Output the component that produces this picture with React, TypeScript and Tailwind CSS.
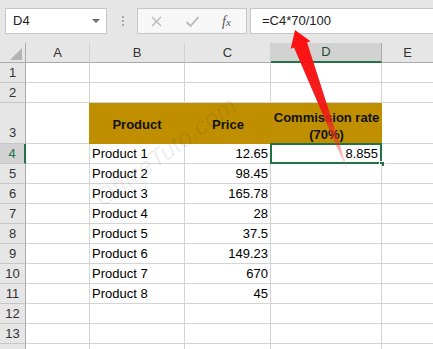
import React from "react";

const FONT = { fontFamily: '"Liberation Sans", Arial, sans-serif' };

const rows: { n: number; b?: string; c?: string; d?: string }[] = [
  { n: 1 },
  { n: 2 },
  { n: 4, b: "Product 1", c: "12.65", d: "8.855" },
  { n: 5, b: "Product 2", c: "98.45" },
  { n: 6, b: "Product 3", c: "165.78" },
  { n: 7, b: "Product 4", c: "28" },
  { n: 8, b: "Product 5", c: "37.5" },
  { n: 9, b: "Product 6", c: "149.23" },
  { n: 10, b: "Product 7", c: "670" },
  { n: 11, b: "Product 8", c: "45" },
  { n: 12 },
  { n: 13 },
  { n: 14 },
];

function DataRow({ n, b, c, d }: { n: number; b?: string; c?: string; d?: string }) {
  const sel = n === 4;
  const label = n === 14 ? "" : String(n);
  return (
    <div className="flex h-[20px]">
      {sel ? (
        <div className="w-[26px] shrink-0 bg-[#d2d2d2] border-r-2 border-r-[#217346] border-b border-b-[#c6c6c6] flex items-center justify-center text-[13px] text-[#217346]">
          {label}
        </div>
      ) : (
        <div className="w-[26px] shrink-0 bg-[#e6e6e6] border-r border-r-[#ababab] border-b border-b-[#c6c6c6] flex items-center justify-center text-[13px] text-[#333]">
          {label}
        </div>
      )}
      <div className="w-[64px] shrink-0 bg-white border-r border-b border-[#d4d4d4]" />
      <div className="w-[95px] shrink-0 bg-white border-r border-b border-[#d4d4d4] flex items-center pl-[2px] text-[13px] text-black whitespace-nowrap">
        {b}
      </div>
      <div className="w-[86px] shrink-0 bg-white border-r border-b border-[#d4d4d4] flex items-center justify-end pr-[2px] text-[13px] text-black">
        {c}
      </div>
      <div className="relative w-[111px] shrink-0 bg-white border-r border-b border-[#d4d4d4] flex items-center justify-end pr-[3px] text-[13px] text-black">
        {d}
        {sel && (
          <>
            <div className="absolute left-[-1px] top-[-1px] right-[-1px] bottom-[-1px] border-2 border-[#217346]" />
            <div className="absolute right-[-4px] bottom-[-4px] w-[6px] h-[6px] bg-[#217346] border border-white" />
          </>
        )}
      </div>
      <div className="flex-1 bg-white border-b border-[#d4d4d4]" />
    </div>
  );
}

export default function App() {
  return (
    <div className="relative w-[433px] h-[349px] overflow-hidden bg-white" style={FONT}>
      {/* Toolbar */}
      <div className="h-[43px] bg-[#e6e6e6] flex items-start pt-[8px] pl-[5px]">
        <div className="w-[102px] h-[26px] shrink-0 bg-white border border-[#c6c6c6] flex items-center justify-between pl-[7px] pr-[6px]">
          <span className="text-[13px] text-[#222]">D4</span>
          <span className="w-0 h-0 border-l-[4px] border-r-[4px] border-t-[4px] border-l-transparent border-r-transparent border-t-[#6d6d6d]" />
        </div>
        <div className="ml-[15px] mt-[8px] flex flex-col gap-[2px]">
          <span className="w-[2px] h-[2px] bg-[#a8a8a8]" />
          <span className="w-[2px] h-[2px] bg-[#a8a8a8]" />
          <span className="w-[2px] h-[2px] bg-[#a8a8a8]" />
        </div>
        <div className="ml-[13px] w-[110px] h-[26px] shrink-0 bg-[#f7f7f7] border border-[#c6c6c6] flex items-center pl-[12px]">
          <svg width="13" height="13" viewBox="0 0 13 13">
            <path d="M2 2 L11 11 M11 2 L2 11" stroke="#b8b8b8" strokeWidth="1.4" fill="none" />
          </svg>
          <svg className="ml-[22px]" width="15" height="13" viewBox="0 0 15 13">
            <path d="M1.5 7 L5.5 11 L13.5 2" stroke="#b8b8b8" strokeWidth="1.8" fill="none" />
          </svg>
          <span
            className="ml-[22px] text-[14px] italic text-[#555]"
            style={{ fontFamily: '"Liberation Serif", "Times New Roman", serif' }}
          >
            f<span className="text-[11px]">x</span>
          </span>
        </div>
        <div className="ml-[3px] h-[26px] flex-1 -mr-[2px] bg-white border border-[#c6c6c6] flex items-center pl-[11px]">
          <span className="text-[13px] text-[#222]">=C4*70/100</span>
        </div>
      </div>

      {/* Column headers */}
      <div className="flex h-[20px] bg-[#e6e6e6]">
        <div className="w-[26px] shrink-0 border-r border-r-[#ababab] border-b border-b-[#ababab] flex items-end justify-end pr-[3px] pb-[2px]">
          <svg width="12" height="12" viewBox="0 0 12 12">
            <path d="M12 0 L12 12 L0 12 Z" fill="#b4b4b4" />
          </svg>
        </div>
        <div className="w-[64px] shrink-0 border-r border-r-[#d0d0d0] border-b border-b-[#ababab] flex items-center justify-center text-[13px] text-[#333]">A</div>
        <div className="w-[95px] shrink-0 border-r border-r-[#d0d0d0] border-b border-b-[#ababab] flex items-center justify-center text-[13px] text-[#333]">B</div>
        <div className="w-[86px] shrink-0 border-r border-r-[#d0d0d0] border-b border-b-[#ababab] flex items-center justify-center text-[13px] text-[#333]">C</div>
        <div className="w-[111px] shrink-0 bg-[#d2d2d2] border-r border-r-[#ababab] border-b-2 border-b-[#217346] flex items-center justify-center text-[13px] text-[#1e4d33]">D</div>
        <div className="flex-1 border-b border-b-[#ababab] flex items-center justify-center text-[13px] text-[#333]">E</div>
      </div>

      {rows.slice(0, 2).map((r) => (
        <DataRow key={r.n} {...r} />
      ))}

      {/* Row 3 */}
      <div className="flex h-[41px]">
        <div className="w-[26px] shrink-0 bg-[#e6e6e6] border-r border-r-[#ababab] border-b border-b-[#c6c6c6] flex items-end justify-center pb-[1px] text-[13px] text-[#333]">
          3
        </div>
        <div className="w-[63px] shrink-0 bg-white border-b border-[#d4d4d4]" />
        <div className="w-[96px] shrink-0 bg-[#bf8f00] flex items-center justify-center pt-[2px] text-[13px] font-bold text-[#111]">
          Product
        </div>
        <div className="w-[86px] shrink-0 bg-[#bf8f00] flex items-center justify-center pt-[2px] text-[13px] font-bold text-[#111]">
          Price
        </div>
        <div className="w-[111px] shrink-0 bg-[#bf8f00] flex flex-col items-center justify-center pt-[4px] text-[13px] leading-[17px] font-bold text-[#111] whitespace-nowrap">
          <span>Commission rate</span>
          <span>(70%)</span>
        </div>
        <div className="flex-1 bg-white border-b border-[#d4d4d4]" />
      </div>

      {rows.slice(2).map((r) => (
        <DataRow key={r.n} {...r} />
      ))}

      {/* Watermark */}
      <div
        className="absolute left-[82px] top-[133px] text-[25px] italic text-black/[0.08] whitespace-nowrap pointer-events-none"
        style={{ transform: "rotate(-36deg)", transformOrigin: "center", fontFamily: '"Liberation Sans", Arial, sans-serif' }}
      >
        OfficeTuto.com
      </div>

      {/* Arrow */}
      <svg className="absolute left-0 top-0 pointer-events-none" width="433" height="349" viewBox="0 0 433 349">
        <defs>
          <linearGradient id="ag" x1="0" y1="30" x2="0" y2="172" gradientUnits="userSpaceOnUse">
            <stop offset="0" stopColor="#ff1010" stopOpacity="1" />
            <stop offset="0.55" stopColor="#f01515" stopOpacity="0.95" />
            <stop offset="0.8" stopColor="#f03030" stopOpacity="0.5" />
            <stop offset="1" stopColor="#f06060" stopOpacity="0" />
          </linearGradient>
        </defs>
        <path
          d="M295 30 L310.5 41.3 L307.1 42.6 L348.4 171.3 L347.4 171.7 L294.0 47.4 L290.7 48.7 Z"
          fill="url(#ag)"
        />
      </svg>
    </div>
  );
}
